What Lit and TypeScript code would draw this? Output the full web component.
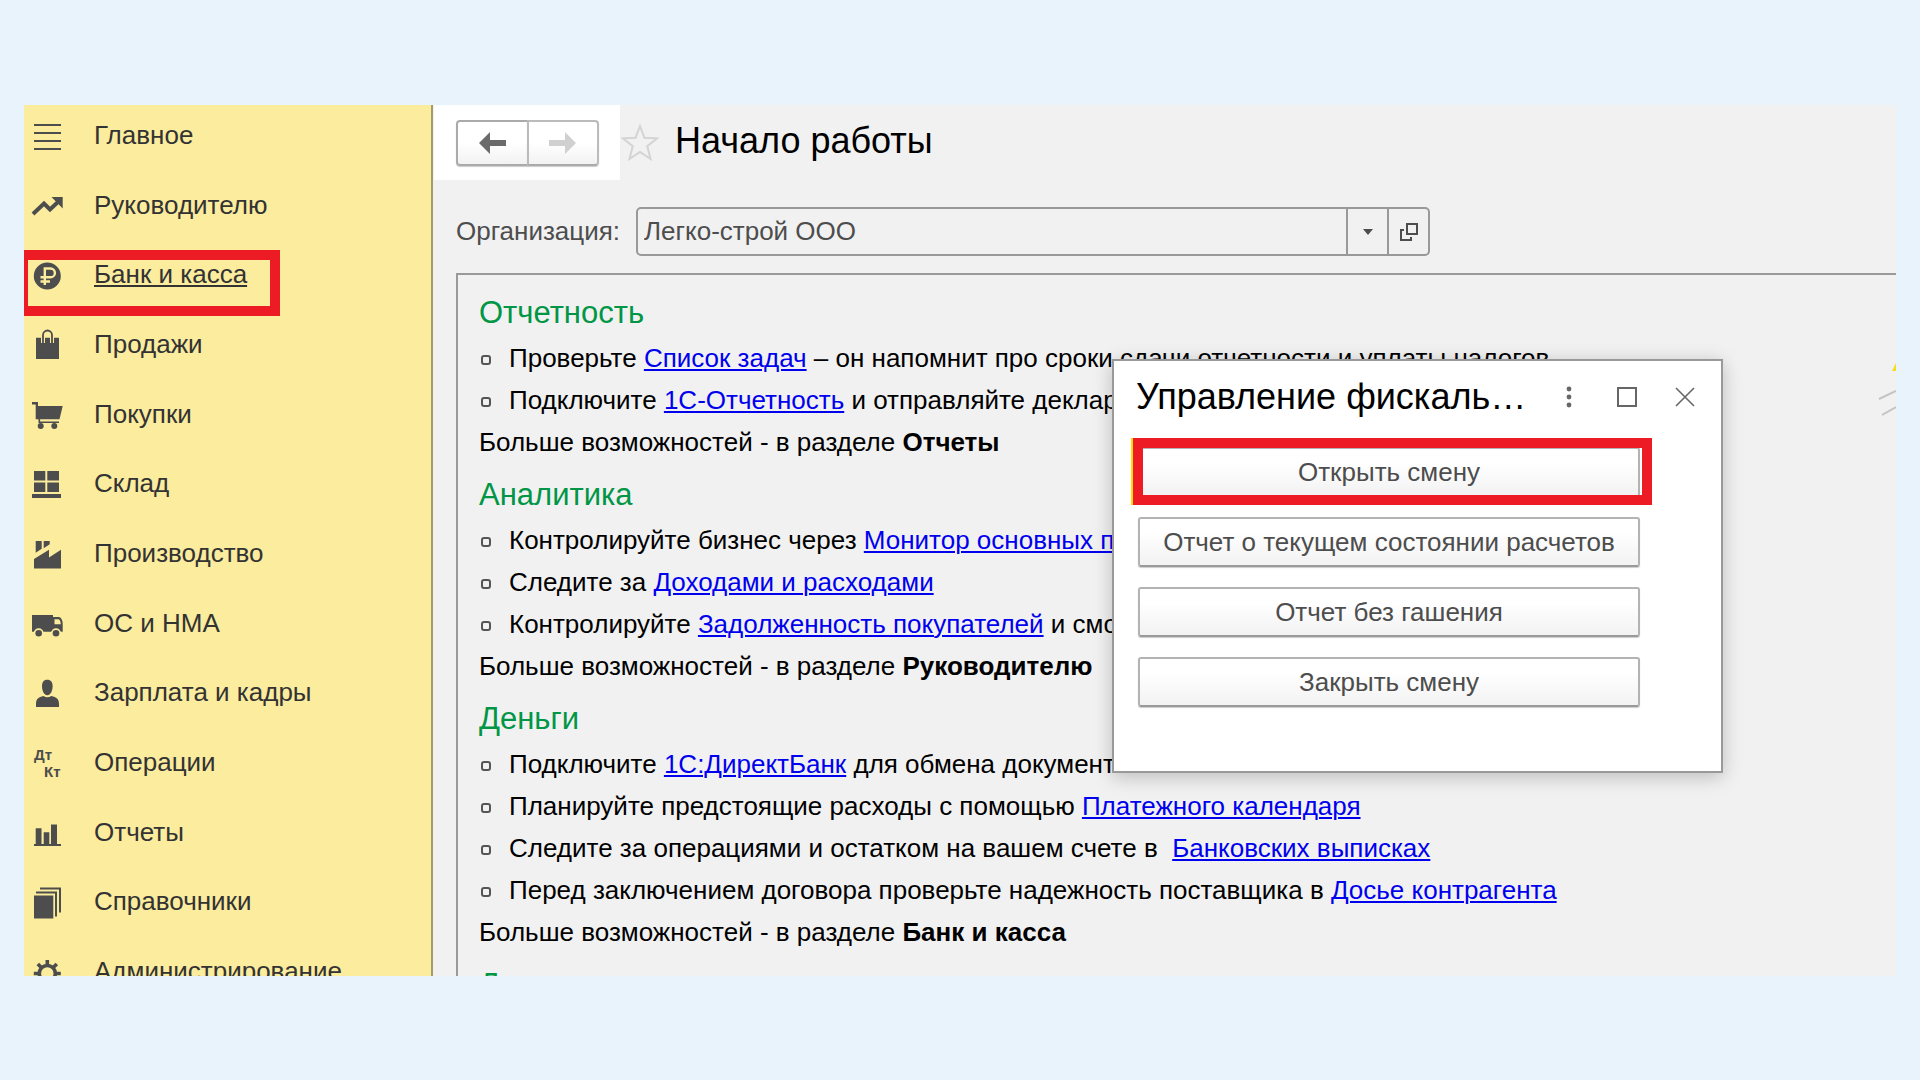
import { LitElement, html, svg, css, TemplateResult, SVGTemplateResult } from "lit";
import { customElement } from "lit/decorators.js";
import { classMap } from "lit/directives/class-map.js";

interface Section {
  label: string;
  icon: SVGTemplateResult;
  active?: boolean;
}

const sections: Section[] = [
  {
    label: "Главное",
    icon: svg`<path d="M4 5h27v2H4zM4 13h27v2H4zM4 21h27v2H4zM4 29h27v2H4z"/>`,
  },
  {
    label: "Руководителю",
    icon: svg`<path d="M3 25L14 14.500L20 20.500L28.500 12.500" fill="none" stroke="currentColor" stroke-width="4"/>
      <path d="M21.500 8H32.700V19.500z"/>`,
  },
  {
    label: "Банк и касса",
    active: true,
    icon: svg`<circle cx="17.300" cy="18" r="13.500"/>
      <path class="cut" d="M14.800 27V10.500H20.500a4.300 4.300 0 0 1 0 8.800H10.500M10.500 23.500H20" fill="none" stroke-width="2.400"/>`,
  },
  {
    label: "Продажи",
    icon: svg`<path d="M6 9.800H11V15h4V9.800h5V15h4V9.800H29V31H6z"/>
      <path d="M13 15V7a4.500 4.500 0 0 1 9 0V15" fill="none" stroke="currentColor" stroke-width="1.800"/>`,
  },
  {
    label: "Покупки",
    icon: svg`<path d="M2 4H8V8H32.700L29.500 21.200H5.700V6.500H2z"/>
      <path d="M9.300 21V24.300H29" fill="none" stroke="currentColor" stroke-width="1.600"/>
      <circle cx="10.700" cy="28" r="3"/><circle cx="24.300" cy="28" r="3"/>`,
  },
  {
    label: "Склад",
    icon: svg`<path d="M4 4H15.300V13.500H4zM17.300 4H29V13.500H17.300zM4 15.500H15.300V25H4zM17.300 15.500H29V25H17.300zM2 27H31V31H2z"/>`,
  },
  {
    label: "Производство",
    icon: svg`<path d="M5.700 4H11.700V11.700L5.700 15.700zM13.700 4H19.700V7.200L13.700 11.200z"/>
      <path d="M4 22L19 12.700V20.400L31 12.700V31.400H4z"/>`,
  },
  {
    label: "ОС и НМА",
    icon: svg`<path d="M2 8H23V10H29Q32.700 11 32.700 17.500V24.700H2z"/>
      <path class="cut-fill" d="M24.500 12.200H28.500Q30.500 12.700 30.800 17.200H24.500z"/>
      <circle class="cut-fill" cx="8.700" cy="26.300" r="5"/><circle class="cut-fill" cx="26" cy="26.300" r="5"/>
      <circle cx="8.700" cy="26.300" r="3.300"/><circle cx="26" cy="26.300" r="3.300"/>`,
  },
  {
    label: "Зарплата и кадры",
    icon: svg`<path d="M17.300 3.700C13.500 3.700 12 6.200 12 10.200C12 14.700 14 19.200 17.300 19.200S22.600 14.700 22.600 10.200C22.600 6.200 21 3.700 17.300 3.700z"/>
      <path d="M6 31V27.700C6 23.200 8.500 21.200 13.500 20Q17.300 22.700 21.300 20C26.500 21.200 29 23.200 29 27.700V31z"/>`,
  },
  {
    label: "Операции",
    icon: svg`<text x="4" y="14">Дт</text><text x="14" y="31">Кт</text>`,
  },
  {
    label: "Отчеты",
    icon: svg`<path d="M5.700 12.200H11.500V28H13.700V16.200H19.300V28H21V8.500H27V28H31V30H4V28H5.700z"/>`,
  },
  {
    label: "Справочники",
    icon: svg`<path d="M4 10.500H23.300V33.500H4z"/>
      <path d="M6 7.500H26V31.500M10 3.500H30V27.500" fill="none" stroke="currentColor" stroke-width="2"/>`,
  },
  {
    label: "Администрирование",
    icon: svg`<circle cx="17.300" cy="18.500" r="8" fill="none" stroke="currentColor" stroke-width="3.600"/>
      <path d="M17.300 5V10M17.300 27V32M3.800 18.500H9M25.600 18.500H30.800M7.800 9L11.400 12.600M26.800 9L23.200 12.600M7.800 28L11.400 24.400M26.800 28L23.200 24.400" fill="none" stroke="currentColor" stroke-width="3.600"/>`,
  },
];

const link = (text: string) => html`<a href="#">${text}</a>`;

interface Topic {
  title: string;
  items: TemplateResult[];
  more: string;
}

const topics: Topic[] = [
  {
    title: "Отчетность",
    items: [
      html`Проверьте ${link("Список задач")} – он напомнит про сроки сдачи отчетности и уплаты налогов`,
      html`Подключите ${link("1С-Отчетность")} и отправляйте декларации`,
    ],
    more: "Отчеты",
  },
  {
    title: "Аналитика",
    items: [
      html`Контролируйте бизнес через ${link("Монитор основных показателей")}`,
      html`Следите за ${link("Доходами и расходами")}`,
      html`Контролируйте ${link("Задолженность покупателей")} и смотрите`,
    ],
    more: "Руководителю",
  },
  {
    title: "Деньги",
    items: [
      html`Подключите ${link("1С:ДиректБанк")} для обмена документами`,
      html`Планируйте предстоящие расходы с помощью ${link("Платежного календаря")}`,
      html`Следите за операциями и остатком на вашем счете в&nbsp; ${link("Банковских выписках")}`,
      html`Перед заключением договора проверьте надежность поставщика в ${link("Досье контрагента")}`,
    ],
    more: "Банк и касса",
  },
];

@customElement("section-nav")
export class SectionNav extends LitElement {
  static styles = css`
    :host {
      display: block;
      flex: none;
      width: 409px;
      box-sizing: border-box;
      background: #fbec9e;
      border-right: 2px solid #a39b6c;
    }
    .nav {
      height: 100%;
    }
    .list {
      box-sizing: border-box;
      display: flex;
      flex-direction: column;
      justify-content: space-between;
      height: calc(100% + 11px);
      margin: 0;
      padding: 14px 0 0 6px;
      list-style: none;
    }
    .row {
      position: relative;
      height: 32px;
    }
    .entry {
      display: flex;
      gap: 28px;
      color: #333;
      font-size: 26px;
      line-height: 32px;
      text-decoration: none;
    }
    .entry.active {
      text-decoration: underline 2px;
      text-underline-offset: 2px;
      text-decoration-skip-ink: none;
    }
    .icon {
      flex: none;
      width: 36px;
      height: 38px;
      color: #4d4d4d;
      fill: currentColor;
      font: bold 15px "Liberation Sans", Arial, sans-serif;
    }
    .cut {
      stroke: #fbec9e;
    }
    .cut-fill {
      fill: #fbec9e;
    }
    .mark {
      position: absolute;
      left: -12px;
      top: -8px;
      width: 242px;
      height: 46px;
      border: 10px solid #ed1c24;
      pointer-events: none;
    }
  `;

  render() {
    return html`<nav class="nav" aria-label="Разделы">
      <ul class="list">
        ${sections.map(
          (s) => html`<li class="row">
            <a class=${classMap({ entry: true, active: !!s.active })} href="#">
              <svg class="icon" viewBox="0 0 36 38" aria-hidden="true">${s.icon}</svg>
              <span>${s.label}</span>
            </a>
            ${s.active ? html`<div class="mark"></div>` : ""}
          </li>`
        )}
      </ul>
    </nav>`;
  }
}

@customElement("shift-dialog")
export class ShiftDialog extends LitElement {
  static styles = css`
    :host {
      display: block;
      box-sizing: border-box;
      width: 611px;
      padding: 14px 24px 64px;
      background: #fff;
      border: 2px solid #999;
      box-shadow: 0 4px 18px rgba(0, 0, 0, 0.22);
    }
    .head {
      display: flex;
      align-items: center;
      height: 44px;
      margin-bottom: 28px;
    }
    .title {
      flex: none;
      width: 402px;
      margin: 0 2px 0 -2px;
      color: #000;
      font-size: 36px;
      line-height: 44px;
      font-weight: normal;
      white-space: nowrap;
    }
    .tool {
      flex: none;
      width: 58px;
      height: 44px;
      padding: 0;
      border: 0;
      background: none;
      color: #666;
    }
    .tool svg {
      display: block;
      margin: 0 auto;
    }
    .actions {
      display: grid;
      gap: 20px;
      margin-right: 57px;
    }
    .slot {
      position: relative;
      display: grid;
    }
    .action {
      height: 50px;
      padding: 0;
      border: 2px solid #b3b3b3;
      border-bottom-color: #999;
      border-radius: 3px;
      background: linear-gradient(#fff 30%, #f2f2f2);
      color: #4d4d4d;
      font: 26px/32px "Liberation Sans", Arial, sans-serif;
      box-shadow: 0 1px 1px #ccc;
    }
    .mark {
      position: absolute;
      left: -5px;
      right: -12px;
      top: -9px;
      bottom: -8px;
      border: 10px solid #ed1c24;
      box-shadow: -2px 0 0 #fd0;
      pointer-events: none;
    }
  `;

  render() {
    const actions = [
      "Открыть смену",
      "Отчет о текущем состоянии расчетов",
      "Отчет без гашения",
      "Закрыть смену",
    ];
    return html`<div role="dialog" aria-labelledby="title">
      <header class="head">
        <h2 class="title" id="title">Управление фискаль…</h2>
        <button class="tool" aria-label="Еще">
          <svg width="20" height="22" fill="currentColor" aria-hidden="true">
            <circle cx="10" cy="3" r="2.400" /><circle cx="10" cy="11" r="2.400" /><circle cx="10" cy="19" r="2.400" />
          </svg>
        </button>
        <button class="tool" aria-label="Развернуть">
          <svg width="20" height="20" fill="none" stroke="currentColor" stroke-width="2" aria-hidden="true">
            <rect x="1" y="1" width="18" height="18" />
          </svg>
        </button>
        <button class="tool" aria-label="Закрыть">
          <svg width="20" height="20" fill="none" stroke="currentColor" stroke-width="1.600" aria-hidden="true">
            <path d="M1 1L19 19M19 1L1 19" />
          </svg>
        </button>
      </header>
      <div class="actions">
        ${actions.map(
          (a, i) => html`<div class="slot">
            <button class="action">${a}</button>
            ${i === 0 ? html`<div class="mark"></div>` : ""}
          </div>`
        )}
      </div>
    </div>`;
  }
}

@customElement("app-root")
export class AppRoot extends LitElement {
  static styles = css`
    :host {
      display: block;
      box-sizing: border-box;
      height: 100vh;
      padding: 105px 24px 104px;
      background: #e8f3fc;
      font-family: "Liberation Sans", Arial, sans-serif;
    }
    .frame {
      display: flex;
      height: 100%;
      overflow: hidden;
      background: #f1f1f1;
    }
    .page {
      position: relative;
      flex: 1;
      min-width: 0;
      display: flex;
      flex-direction: column;
      padding-left: 1px;
    }
    .top {
      display: flex;
      align-items: center;
      height: 75px;
    }
    .history {
      display: flex;
      align-items: center;
      height: 75px;
      box-sizing: border-box;
      padding: 0 21px 0 22px;
      background: #fff;
    }
    .step {
      display: grid;
      place-items: center;
      width: 72px;
      height: 46px;
      padding: 0;
      border: 2px solid #bbb;
      border-bottom-color: #aaa;
      background: linear-gradient(#fff 50%, #f2f2f2);
      color: #d0d0d0;
      box-shadow: 0 1px 1px #ccc;
    }
    .step.back {
      width: 73px;
      margin-right: -2px;
      border-color: #aaa;
      border-radius: 4px 0 0 4px;
      color: #6b6b6b;
    }
    .step.next {
      border-radius: 0 4px 4px 0;
    }
    .star {
      width: 40px;
      height: 40px;
      padding: 0;
      border: 0;
      background: none;
    }
    .star svg {
      display: block;
    }
    .title {
      margin: 0 0 3px 15px;
      color: #000;
      font-size: 36px;
      line-height: 44px;
      font-weight: normal;
    }
    .org {
      display: flex;
      align-items: center;
      gap: 16px;
      margin: 27px 0 17px 22px;
      color: #4d4d4d;
      font-size: 26px;
      line-height: 32px;
    }
    .label {
      flex: none;
      width: 164px;
      padding-bottom: 2px;
    }
    .combo {
      box-sizing: border-box;
      display: flex;
      width: 794px;
      height: 49px;
      border: 2px solid #999;
      border-radius: 5px;
    }
    .value {
      flex: 1;
      min-width: 0;
      padding: 0 6px 2px;
      border: 0;
      outline: 0;
      background: none;
      color: #4d4d4d;
      font: 26px/32px "Liberation Sans", Arial, sans-serif;
    }
    .pick {
      display: grid;
      place-items: center;
      box-sizing: border-box;
      width: 41px;
      padding: 0;
      border: 0;
      border-left: 2px solid #999;
      background: none;
      color: #4d4d4d;
    }
    .panel {
      position: relative;
      flex: 1;
      min-height: 0;
      margin-left: 22px;
      padding: 17px 0 0 21px;
      border: solid #999;
      border-width: 2px 0 0 2px;
      overflow: hidden;
      color: #000;
      font-size: 26px;
      line-height: 42px;
      white-space: nowrap;
    }
    .topic {
      margin: 0 0 3px;
      color: #009646;
      font-size: 31px;
      line-height: 42px;
      font-weight: normal;
    }
    .items {
      margin: 0;
      padding: 0;
      list-style: none;
    }
    .item {
      display: flex;
      align-items: center;
      gap: 18px;
      white-space: pre;
    }
    .item::before {
      content: "";
      box-sizing: border-box;
      width: 10px;
      height: 10px;
      margin: 4px 0 0 2px;
      border: 2px solid #555;
      border-radius: 3px;
    }
    .more {
      margin: 0 0 11px;
    }
    .item a {
      color: #00e;
      text-decoration: underline 2px;
      text-underline-offset: 2px;
    }
    .art {
      position: absolute;
      right: 0;
      top: 88px;
    }
    .dialog {
      position: absolute;
      left: 679px;
      top: 254px;
    }
  `;

  render() {
    return html`<div class="frame">
      <section-nav></section-nav>
      <main class="page">
        <header class="top">
          <div class="history">
            <button class="step back" aria-label="Назад">
              <svg width="28" height="22" fill="currentColor" aria-hidden="true">
                <path d="M0 11L11 0V8H27V14H11V22z" />
              </svg>
            </button>
            <button class="step next" aria-label="Вперед">
              <svg width="28" height="22" fill="currentColor" aria-hidden="true">
                <path d="M27 11L16 0V8H0V14H16V22z" />
              </svg>
            </button>
          </div>
          <button class="star" aria-label="В избранное">
            <svg width="40" height="40" fill="none" stroke="#d4d4d4" stroke-width="2" aria-hidden="true">
              <path d="M20 3L24.400 14.700L37 15.300L27.200 23.100L30.600 36L20 28.900L9.400 36L12.800 23.100L3 15.300L15.600 14.700z" />
            </svg>
          </button>
          <h1 class="title">Начало работы</h1>
        </header>
        <div class="org">
          <label class="label" for="org">Организация:</label>
          <div class="combo">
            <input class="value" id="org" type="text" .value=${"Легко-строй ООО"} />
            <button class="pick" aria-label="Выбрать">
              <svg width="10" height="6" fill="currentColor" aria-hidden="true"><path d="M0 0H10L5 6z" /></svg>
            </button>
            <button class="pick" aria-label="Открыть">
              <svg width="18" height="18" fill="none" stroke="currentColor" stroke-width="2" aria-hidden="true">
                <path d="M7 1H17V11H7zM4 7H1V17H11V14" />
              </svg>
            </button>
          </div>
        </div>
        <section class="panel">
          ${topics.map(
            (t) => html`<h2 class="topic">${t.title}</h2>
              <ul class="items">
                ${t.items.map((i) => html`<li class="item"><span>${i}</span></li>`)}
              </ul>
              <p class="more">Больше возможностей - в разделе <b>${t.more}</b></p>`
          )}
          <h2 class="topic">Документы</h2>
          <svg class="art" width="18" height="54" aria-hidden="true">
            <path d="M18 0V8H14z" fill="#f7dc1c" />
            <path d="M1 36L18 28M4 52L18 44" stroke="#c4c4c4" stroke-width="2" />
          </svg>
        </section>
        <shift-dialog class="dialog"></shift-dialog>
      </main>
    </div>`;
  }
}
